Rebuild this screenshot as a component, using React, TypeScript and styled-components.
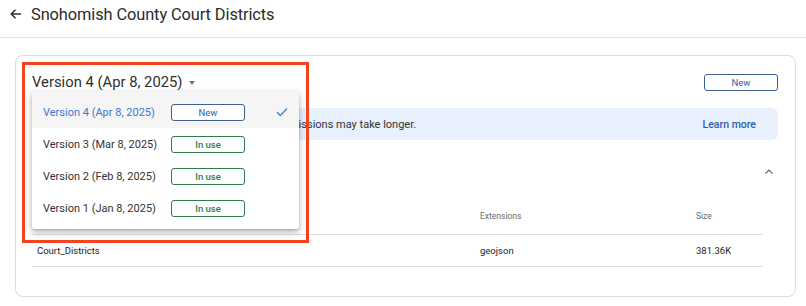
import React from 'react';
import styled, { createGlobalStyle } from 'styled-components';

const GlobalStyle = createGlobalStyle`
  body {
    margin: 0;
    background: #ffffff;
    font-family: Roboto, 'Liberation Sans', sans-serif;
    color: #333333;
  }
`;

const Header = styled.header`
  height: 37px;
  display: flex;
  align-items: center;
  gap: 8px;
  padding: 0 0 0 9px;
  border-bottom: 1px solid #e3e3e3;
  box-sizing: content-box;
`;

const BackButton = styled.span`
  display: flex;
  width: 14px;
  height: 14px;
  margin-top: -9px;
  color: #333;
`;

const Title = styled.h1`
  margin: -9px 0 0;
  font-size: 16.4px;
  font-weight: 400;
  color: #2b2b2b;
  letter-spacing: -0.1px;
`;

const Main = styled.main`
  padding: 17px 10px 9px 15px;
`;

const Card = styled.section`
  position: relative;
  border: 1px solid #dadce0;
  border-radius: 8px;
  padding: 16px 17px 29px 16px;
`;

const CardHeader = styled.div`
  position: relative;
  height: 20px;
  display: flex;
  align-items: center;
  justify-content: space-between;
`;

const VersionTitle = styled.div`
  display: flex;
  align-items: center;
  gap: 6px;
  font-size: 14.8px;
  color: #2f2f2f;
`;

const Caret = styled.span`
  width: 0;
  height: 0;
  border-left: 3.5px solid transparent;
  border-right: 3.5px solid transparent;
  border-top: 4px solid #777;
  margin-top: 2px;
`;

const OutlineButton = styled.span<{ $tone: 'blue' | 'green' }>`
  box-sizing: border-box;
  width: 74px;
  height: 17px;
  display: inline-flex;
  align-items: center;
  justify-content: center;
  border-radius: 3px;
  font-size: 9.5px;
  font-weight: ${(p) => (p.$tone === 'green' ? 500 : 400)};
  border: 1px solid ${(p) => (p.$tone === 'green' ? '#2e7d4f' : '#3d5f96')};
  color: ${(p) => (p.$tone === 'green' ? '#2e7d4f' : '#3461a8')};
  background: #fff;
`;

const Banner = styled.div`
  margin-top: 16px;
  height: 32px;
  border-radius: 6px;
  background: #e8f0fe;
  display: flex;
  align-items: center;
  justify-content: space-between;
  padding: 0 22px 0 0;
  font-size: 11px;
  color: #333;
`;

const BannerText = styled.span`
  padding-left: 146px;
`;

const LearnMore = styled.span`
  color: #2e5fab;
  font-weight: 500;
  font-size: 10.5px;
`;

const SectionRow = styled.div`
  margin-top: 17px;
  height: 32px;
  display: flex;
  align-items: center;
  justify-content: flex-end;
`;

const Chevron = styled.span`
  display: flex;
  width: 10px;
  height: 10px;
  margin-right: 4px;
  margin-top: -3px;
  color: #666;
`;

const Table = styled.div`
  margin: 14px 15px 0 0;
`;

const TableRow = styled.div<{ $head?: boolean }>`
  display: grid;
  grid-template-columns: 443px 216px 1fr;
  align-items: center;
  height: 32px;
  box-sizing: border-box;
  padding: ${(p) => (p.$head ? '0 0 6px 5px' : '0 0 0 5px')};
  border-bottom: 1px solid #e0e0e0;
  font-size: ${(p) => (p.$head ? '8.5px' : '9.5px')};
  color: ${(p) => (p.$head ? '#6b6b6b' : '#222')};
`;

const Menu = styled.div`
  position: absolute;
  left: 0;
  top: 19px;
  width: 267px;
  background: #fff;
  border-radius: 3px;
  box-shadow: 0 3px 7px rgba(0, 0, 0, 0.3), 0 1px 2px rgba(0, 0, 0, 0.12);
  padding-bottom: 5px;
  z-index: 2;
`;

const MenuItem = styled.div<{ $selected?: boolean }>`
  display: grid;
  grid-template-columns: 128px 74px 1fr;
  align-items: center;
  height: 32px;
  padding-left: 11px;
  font-size: 11px;
  color: ${(p) => (p.$selected ? '#3b78d4' : '#333')};
  background: ${(p) => (p.$selected ? '#f5f5f5' : '#fff')};

  &:first-child {
    height: 37px;
    padding-top: 5px;
    box-sizing: border-box;
  }
`;

const Check = styled.span`
  justify-self: end;
  margin-right: 11px;
  display: flex;
  width: 12px;
  height: 10px;
  color: #4a7fd0;
`;

const Highlight = styled.div`
  position: absolute;
  left: 6px;
  top: 6px;
  width: 281px;
  height: 175px;
  border: 3px solid #f4441f;
  z-index: 3;
  pointer-events: none;
`;

const versions = [
  { label: 'Version 4 (Apr 8, 2025)', status: 'New', selected: true },
  { label: 'Version 3 (Mar 8, 2025)', status: 'In use' },
  { label: 'Version 2 (Feb 8, 2025)', status: 'In use' },
  { label: 'Version 1 (Jan 8, 2025)', status: 'In use' },
];

const App: React.FC = () => {
  return (
    <>
      <GlobalStyle />
      <Header>
        <BackButton>
          <svg viewBox="0 0 14 14" width="14" height="14" fill="none" stroke="currentColor" strokeWidth="1.6">
            <path d="M12 7H2.5M6.5 2.8L2.3 7l4.2 4.2" />
          </svg>
        </BackButton>
        <Title>Snohomish County Court Districts</Title>
      </Header>
      <Main>
        <Card>
          <Highlight />
          <CardHeader>
            <VersionTitle>
              Version 4 (Apr 8, 2025)
              <Caret />
            </VersionTitle>
            <OutlineButton $tone="blue">New</OutlineButton>
            <Menu>
              {versions.map((v) => (
                <MenuItem key={v.label} $selected={v.selected}>
                  <span>{v.label}</span>
                  <OutlineButton $tone={v.status === 'New' ? 'blue' : 'green'}>{v.status}</OutlineButton>
                  {v.selected && (
                    <Check>
                      <svg viewBox="0 0 12 10" width="12" height="10" fill="none" stroke="currentColor" strokeWidth="1.3">
                        <path d="M1 5.2l3.3 3.3L11 1.5" />
                      </svg>
                    </Check>
                  )}
                </MenuItem>
              ))}
            </Menu>
          </CardHeader>
          <Banner>
            <BannerText>Large uploads and submissions may take longer.</BannerText>
            <LearnMore>Learn more</LearnMore>
          </Banner>
          <SectionRow>
            <Chevron>
              <svg viewBox="0 0 10 10" width="10" height="10" fill="none" stroke="currentColor" strokeWidth="1.1">
                <path d="M1.5 6.5L5 3l3.5 3.5" />
              </svg>
            </Chevron>
          </SectionRow>
          <Table>
            <TableRow $head>
              <span />
              <span>Extensions</span>
              <span>Size</span>
            </TableRow>
            <TableRow>
              <span>Court_Districts</span>
              <span>geojson</span>
              <span>381.36K</span>
            </TableRow>
          </Table>
        </Card>
      </Main>
    </>
  );
};

export default App;
